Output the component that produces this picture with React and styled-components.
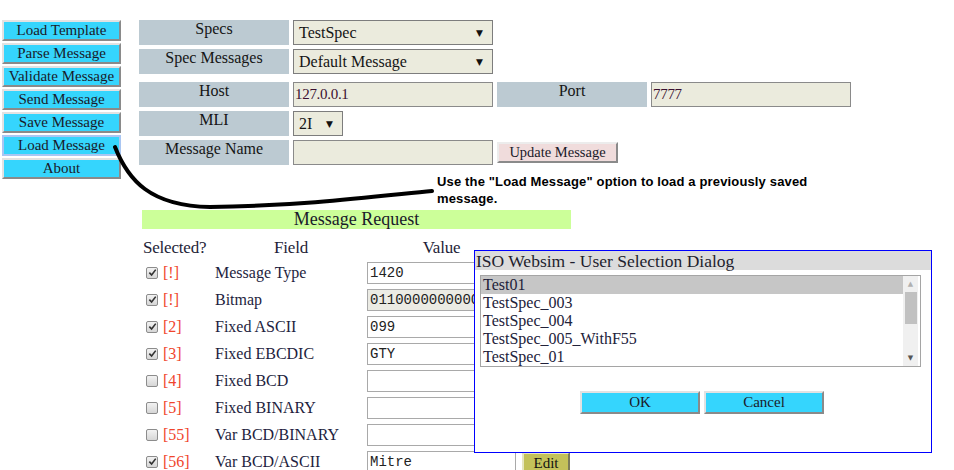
import styled, { createGlobalStyle } from "styled-components";

const GlobalStyle = createGlobalStyle`
  body {
    margin: 0;
    background: #ffffff;
    font-family: "Liberation Serif", "Times New Roman", serif;
    color: #1a1a1a;
  }
`;

const fields = [
  { checked: true, id: "!", name: "Message Type", value: "1420" },
  { checked: true, id: "!", name: "Bitmap", value: "0110000000000000", disabled: true },
  { checked: true, id: "2", name: "Fixed ASCII", value: "099" },
  { checked: true, id: "3", name: "Fixed EBCDIC", value: "GTY" },
  { checked: false, id: "4", name: "Fixed BCD", value: "" },
  { checked: false, id: "5", name: "Fixed BINARY", value: "" },
  { checked: false, id: "55", name: "Var BCD/BINARY", value: "" },
  { checked: true, id: "56", name: "Var BCD/ASCII", value: "Mitre", edit: true },
];

const sideItems = [
  "Load Template",
  "Parse Message",
  "Validate Message",
  "Send Message",
  "Save Message",
  "Load Message",
  "About",
];

const choices = ["Test01", "TestSpec_003", "TestSpec_004", "TestSpec_005_WithF55", "TestSpec_01"];

export default function App() {
  return (
    <>
      <GlobalStyle />
      <Page>
        <Sidebar>
          {sideItems.map((s) => (
            <SideButton key={s} $focused={s === "Load Message"}>
              {s}
            </SideButton>
          ))}
        </Sidebar>

        <Main>
          <FormRow>
            <Label>Specs</Label>
            <SelectBox>
              <span>TestSpec</span>
              <Arrow>▼</Arrow>
            </SelectBox>
          </FormRow>
          <FormRow>
            <Label>Spec Messages</Label>
            <SelectBox>
              <span>Default Message</span>
              <Arrow>▼</Arrow>
            </SelectBox>
          </FormRow>
          <FormRow $spaced>
            <Label>Host</Label>
            <TextBox defaultValue="127.0.0.1" />
            <Label>Port</Label>
            <TextBox defaultValue="7777" />
          </FormRow>
          <FormRow>
            <Label>MLI</Label>
            <SelectBox $small>
              <span>2I</span>
              <Arrow>▼</Arrow>
            </SelectBox>
          </FormRow>
          <FormRow>
            <Label>Message Name</Label>
            <TextBox defaultValue="" />
            <UpdateButton>Update Message</UpdateButton>
          </FormRow>

          <SectionBar>Message Request</SectionBar>

          <FieldTable>
            <HeadCell $left>Selected?</HeadCell>
            <HeadCell>Field</HeadCell>
            <HeadCell>Value</HeadCell>
            <HeadCell />
            {fields.map((f) => (
              <FieldRow key={f.name + f.id}>
                <SelectCell>
                  <Check $checked={f.checked}>
                    {f.checked && (
                      <svg width="9" height="9" viewBox="0 0 10 10">
                        <path d="M1.5 5.2 L4 7.8 L8.6 1.8" fill="none" stroke="#333" strokeWidth="1.8" />
                      </svg>
                    )}
                  </Check>
                  <FieldId>[{f.id}]</FieldId>
                </SelectCell>
                <FieldName>{f.name}</FieldName>
                <ValueInput defaultValue={f.value} $disabled={f.disabled} />
                <div>{f.edit && <EditButton>Edit</EditButton>}</div>
              </FieldRow>
            ))}
          </FieldTable>
        </Main>

        <Callout>
          <svg width="340" height="80" viewBox="0 0 340 80">
            <path
              d="M3 7 C 16 40 38 66 98 67 C 190 66 268 56 320 51"
              fill="none"
              stroke="#000"
              strokeWidth="4"
              strokeLinecap="round"
            />
          </svg>
        </Callout>
        <Note>Use the "Load Message" option to load a previously saved message.</Note>

        <Dialog>
          <DialogTitle>ISO Websim - User Selection Dialog</DialogTitle>
          <ListBox>
            <ListItems>
              {choices.map((c, i) => (
                <ListItem key={c} $selected={i === 0}>
                  {c}
                </ListItem>
              ))}
            </ListItems>
            <ScrollTrack>
              <ScrollArrow>▲</ScrollArrow>
              <ScrollThumb />
              <ScrollArrow $down>▼</ScrollArrow>
            </ScrollTrack>
          </ListBox>
          <DialogButtons>
            <DialogButton>OK</DialogButton>
            <DialogButton>Cancel</DialogButton>
          </DialogButtons>
        </Dialog>
      </Page>
    </>
  );
}

const Page = styled.div`
  position: relative;
  width: 954px;
  height: 470px;
  overflow: hidden;
  display: flex;
  align-items: flex-start;
`;

const Sidebar = styled.div`
  margin: 20px 0 0 2px;
  width: 119px;
  display: flex;
  flex-direction: column;
  gap: 2px;
`;

const SideButton = styled.button`
  box-sizing: border-box;
  height: 21px;
  padding: 0;
  background: #35d5fd;
  border: 2px solid;
  border-color: ${(p) => (p.$focused ? "#a9c6f2" : "#e2e2e2 #8a8a8a #8a8a8a #e2e2e2")};
  font-family: "Liberation Serif", serif;
  font-size: 15px;
  color: #1a1a2a;
  line-height: 15px;
  text-align: center;
`;

const Main = styled.div`
  margin: 20px 0 0 18px;
  display: flex;
  flex-direction: column;
`;

const FormRow = styled.div`
  display: flex;
  gap: 4px;
  height: 25px;
  margin-bottom: 4px;
  margin-top: ${(p) => (p.$spaced ? "4px" : "0")};
`;

const Label = styled.div`
  box-sizing: border-box;
  width: 150px;
  background: #bccad2;
  text-align: center;
  font-size: 16px;
  line-height: 18px;
  color: #151515;
`;

const SelectBox = styled.div`
  box-sizing: border-box;
  width: ${(p) => (p.$small ? "50px" : "200px")};
  height: 25px;
  display: flex;
  align-items: center;
  justify-content: space-between;
  padding: 0 9px 0 5px;
  background: #ebebdd;
  border: 1px solid #7d7d7d;
  font-size: 16px;
  color: #151515;
`;

const Arrow = styled.span`
  font-size: 9px;
  color: #111;
  font-family: "DejaVu Sans", sans-serif;
`;

const TextBox = styled.input`
  box-sizing: border-box;
  width: 200px;
  height: 25px;
  padding: 0 1px;
  background: #ebebdd;
  border: 1px solid #8a8a8a;
  font-family: "Liberation Serif", serif;
  font-size: 15px;
  letter-spacing: -0.3px;
  color: #3a1030;
  outline: none;
`;

const UpdateButton = styled.button`
  box-sizing: border-box;
  align-self: flex-start;
  margin-top: 2px;
  width: 121px;
  height: 21px;
  padding: 0;
  background: #f0dcdc;
  border: 2px solid;
  border-color: #ececec #8a8a8a #8a8a8a #ececec;
  font-family: "Liberation Serif", serif;
  font-size: 14.5px;
  color: #1a1a2a;
`;

const SectionBar = styled.div`
  margin: 41px 0 0 3px;
  width: 429px;
  height: 19px;
  background: #ccff99;
  text-align: center;
  font-size: 18px;
  line-height: 19px;
  color: #1a1a2a;
`;

const FieldTable = styled.div`
  margin-left: 4px;
  display: grid;
  grid-template-columns: 72px 152px 149px 60px;
  grid-auto-rows: 27px;
  grid-template-rows: 30px;
`;

const HeadCell = styled.div`
  padding-top: 6px;
  text-align: ${(p) => (p.$left ? "left" : "center")};
  font-size: 17px;
  line-height: 25px;
  color: #1e1e38;
  letter-spacing: -0.2px;
`;

const FieldRow = styled.div`
  display: contents;
`;

const SelectCell = styled.div`
  display: flex;
  align-items: center;
  gap: 5px;
  padding-left: 3px;
`;

const Check = styled.span`
  box-sizing: border-box;
  width: 12px;
  height: 12px;
  display: flex;
  align-items: center;
  justify-content: center;
  border: 1px solid #8c8c8c;
  border-radius: 2px;
  background: linear-gradient(#f2f2f2, #d6d6d6);
`;

const FieldId = styled.span`
  font-size: 16px;
  color: #f0452c;
`;

const FieldName = styled.div`
  display: flex;
  align-items: center;
  font-size: 16px;
  color: #1e1e40;
`;

const ValueInput = styled.input`
  box-sizing: border-box;
  align-self: center;
  width: 149px;
  height: 22px;
  padding: 0 2px;
  background: ${(p) => (p.$disabled ? "#ebebe4" : "#ffffff")};
  border: 1px solid #a9a9a9;
  font-family: "Liberation Mono", "Courier New", monospace;
  font-size: 14px;
  color: #222;
  outline: none;
`;

const EditButton = styled.button`
  box-sizing: border-box;
  margin: 4px 0 0 6px;
  width: 48px;
  height: 22px;
  padding: 0;
  background: #c3c15a;
  border: 2px solid;
  border-color: #e6e6c0 #7a7a5a #7a7a5a #e6e6c0;
  font-family: "Liberation Serif", serif;
  font-size: 15px;
  color: #111;
`;

const Callout = styled.div`
  position: absolute;
  left: 112px;
  top: 140px;
  line-height: 0;
`;

const Note = styled.div`
  position: absolute;
  left: 437px;
  top: 173px;
  width: 385px;
  font-family: "Liberation Sans", sans-serif;
  font-weight: bold;
  font-size: 13px;
  letter-spacing: 0.15px;
  line-height: 17px;
  color: #000;
`;

const Dialog = styled.div`
  position: absolute;
  left: 474px;
  top: 250px;
  box-sizing: border-box;
  width: 458px;
  height: 203px;
  border: 1px solid #0000ff;
  background: #ffffff;
`;

const DialogTitle = styled.div`
  height: 19px;
  padding-left: 1px;
  background: #dcdcdc;
  font-size: 17.5px;
  line-height: 21px;
  color: #1e1e2e;
  white-space: nowrap;
`;

const ListBox = styled.div`
  box-sizing: border-box;
  margin: 5px 0 0 5px;
  width: 441px;
  height: 92px;
  border: 1px solid #a5a5a5;
  display: flex;
`;

const ListItems = styled.div`
  flex: 1;
  display: flex;
  flex-direction: column;
`;

const ListItem = styled.div`
  height: 18px;
  padding-left: 2px;
  background: ${(p) => (p.$selected ? "#c6c6c6" : "transparent")};
  font-size: 16px;
  line-height: 18px;
  color: #22223a;
`;

const ScrollTrack = styled.div`
  width: 15px;
  margin-right: 2px;
  background: #f0f0f0;
  display: flex;
  flex-direction: column;
  align-items: center;
`;

const ScrollArrow = styled.div`
  height: 16px;
  font-size: 7px;
  line-height: 16px;
  color: ${(p) => (p.$down ? "#555" : "#b0b0b0")};
  font-family: "DejaVu Sans", sans-serif;
  margin-top: ${(p) => (p.$down ? "auto" : "0")};
`;

const ScrollThumb = styled.div`
  width: 12px;
  height: 32px;
  background: #c1c1c1;
`;

const DialogButtons = styled.div`
  display: flex;
  justify-content: center;
  gap: 4px;
  margin: 24px 0 0 -2px;
`;

const DialogButton = styled.button`
  box-sizing: border-box;
  width: 120px;
  height: 23px;
  padding: 0;
  background: #35d5fd;
  border: 2px solid;
  border-color: #e2e2e2 #8a8a8a #8a8a8a #e2e2e2;
  font-family: "Liberation Serif", serif;
  font-size: 15px;
  color: #1a1a2a;
`;
